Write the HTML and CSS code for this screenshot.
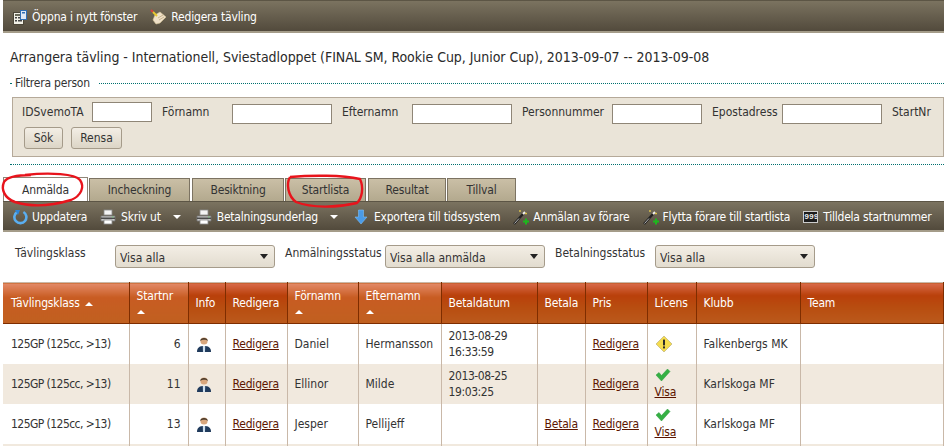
FILE: index.html
```html
<!DOCTYPE html>
<html lang="sv">
<head>
<meta charset="utf-8">
<title>Arrangera tävling</title>
<link rel="stylesheet" href="styles.css">
</head>
<body>
<svg class="defs" width="0" height="0" aria-hidden="true">
  <symbol id="i-window" viewBox="0 0 16 16">
    <rect x="1.5" y="3.5" width="10" height="12" fill="#f2f0e6" stroke="#4c4638"/>
    <rect x="3" y="5" width="7" height="2" fill="#6a6a5a"/>
    <rect x="3" y="8" width="2" height="1.5" fill="#444"/><rect x="6" y="8" width="4" height="1.5" fill="#444"/>
    <rect x="3" y="11" width="2" height="1.5" fill="#444"/><rect x="6" y="11" width="4" height="1.5" fill="#444"/>
    <rect x="8.5" y="1.5" width="6" height="9" fill="#dfe9f5" stroke="#2f6fb5"/>
    <rect x="10" y="3" width="3" height="1.5" fill="#2f6fb5"/>
  </symbol>
  <symbol id="i-brush" viewBox="0 0 18 16">
    <path d="M5 6 L10 3 L16 8 L10 14 L6 15 L3 11 Z" fill="#efe0c8" stroke="#d8c89a" stroke-width=".6"/>
    <path d="M8 9 L13 6 M9 11 L14 8" stroke="#c8b48e" stroke-width="1"/>
    <path d="M1 1 L3 3" stroke="#d8403a" stroke-width="2"/>
    <path d="M3 3 L7 7" stroke="#e8c830" stroke-width="2"/>
  </symbol>
  <symbol id="i-refresh" viewBox="0 0 16 16">
    <path d="M5 3.2 A6 6 0 1 0 11.4 3" fill="none" stroke="#5aaef0" stroke-width="2.6"/>
    <path d="M3 1 L8 1 L6 6 Z" fill="#2f86d8"/>
  </symbol>
  <symbol id="i-print" viewBox="0 0 16 16">
    <rect x="4" y="1" width="8" height="5" fill="#f4f4f4" stroke="#8a8a8a" stroke-width=".8"/>
    <path d="M1 7 L15 7 L15 12 L1 12 Z" fill="#c8c8c8" stroke="#777" stroke-width=".8"/>
    <rect x="1" y="8.5" width="14" height="1.5" fill="#4a4a4a"/>
    <rect x="4" y="11" width="8" height="4" fill="#fff" stroke="#8a8a8a" stroke-width=".8"/>
    <rect x="12" y="7.6" width="1.5" height=".8" fill="#6c6"/>
  </symbol>
  <symbol id="i-down" viewBox="0 0 16 16">
    <path d="M5.5 1 H10.5 V8 H14 L8 15 L2 8 H5.5 Z" fill="#4a9be8" stroke="#7cc0f5" stroke-width=".6"/>
  </symbol>
  <symbol id="i-wand" viewBox="0 0 18 16">
    <path d="M1 15 L10 5" stroke="#222" stroke-width="2.4"/>
    <path d="M1.5 14.5 L6 9.5" stroke="#ddd" stroke-width=".8"/>
    <path d="M10 5 L12 3" stroke="#eee" stroke-width="2"/>
    <path d="M7 1 V3 M6 2 H8 M13 3.5 V5.5 M12 4.5 H14" stroke="#ecd24a" stroke-width=".8"/>
    <path d="M13 9.5 V15.5 M10 12.5 H16" stroke="#1db81d" stroke-width="2"/>
  </symbol>
  <symbol id="i-person" viewBox="0 0 16 16">
    <path d="M1 16 C1 11 4 10 8 10 C12 10 15 11 15 16 Z" fill="#1f3a5c"/>
    <path d="M6.8 10 H9.2 L9 16 H7 Z" fill="#cfe0ee"/>
    <circle cx="8" cy="5" r="3.6" fill="#d9a77d"/>
    <path d="M4.2 5 C4 1 12 1 11.8 5 C10.5 3.4 6 3.4 4.2 5 Z" fill="#4a3a2a"/>
  </symbol>
  <symbol id="i-warn" viewBox="0 0 18 18">
    <path d="M9 1 L17 9 L9 17 L1 9 Z" fill="#f5dc4e" stroke="#cfc48a" stroke-linejoin="round"/>
    <rect x="8" y="4.6" width="2" height="5.8" fill="#2b2b2b"/>
    <rect x="8" y="11.4" width="2" height="2" fill="#2b2b2b"/>
  </symbol>
  <symbol id="i-check" viewBox="0 0 16 14">
    <path d="M1 7 L4 4.5 L6.5 7.5 L12.5 1 L15 3.5 L6.5 13 Z" fill="#35b044" stroke="#2a9a3a" stroke-width=".5"/>
  </symbol>
</svg>

<div class="page">
  <nav class="toolbar toolbar-top">
    <a class="tool"><svg class="ico"><use href="#i-window"/></svg>Öppna i nytt fönster</a>
    <a class="tool"><svg class="ico ico-wide"><use href="#i-brush"/></svg>Redigera tävling</a>
  </nav>

  <h1 class="title">Arrangera tävling - Internationell, Sviestadloppet (FINAL SM, Rookie Cup, Junior Cup), 2013-09-07 -- 2013-09-08</h1>

  <fieldset class="filter">
    <legend class="filter-legend">Filtrera person</legend>
    <div class="filter-panel">
      <div class="filter-row">
        <label class="f-label">IDSvemoTA</label><input class="f-input f-input-id" type="text">
        <label class="f-label">Förnamn</label><input class="f-input" type="text">
        <label class="f-label">Efternamn</label><input class="f-input" type="text">
        <label class="f-label f-label-wide">Personnummer</label><input class="f-input f-input-pn" type="text">
        <label class="f-label">Epostadress</label><input class="f-input" type="text">
        <label class="f-label">StartNr</label>
      </div>
      <div class="filter-buttons">
        <button class="btn btn-sok" type="button">Sök</button>
        <button class="btn btn-rensa" type="button">Rensa</button>
      </div>
    </div>
  </fieldset>

  <div class="tabs">
    <a class="tab tab-active">Anmälda</a>
    <a class="tab tab-1">Incheckning</a>
    <a class="tab tab-2">Besiktning</a>
    <a class="tab tab-3">Startlista</a>
    <a class="tab tab-4">Resultat</a>
    <a class="tab tab-5">Tillval</a>
    <svg class="scribble scribble-a" viewBox="0 0 84 36"><path d="M24 3 C50 0 74 2 79 8 C84 15 80 24 70 28 C50 34 30 35 14 30 C3 26 0 17 3 10 C6 5 16 3 30 3" fill="none" stroke="#e8141c" stroke-width="2.4"/></svg>
    <svg class="scribble scribble-b" viewBox="0 0 82 36"><path d="M6 3 C28 1 58 1 76 5 C80 14 78 24 73 29 C52 34 28 34 12 28 C4 22 2 10 6 3" fill="none" stroke="#e8141c" stroke-width="2.4"/></svg>
  </div>

  <nav class="toolbar toolbar-sub">
    <a class="tool"><svg class="ico"><use href="#i-refresh"/></svg>Uppdatera</a>
    <a class="tool"><svg class="ico ico-print"><use href="#i-print"/></svg>Skriv ut<span class="caret"></span></a>
    <a class="tool"><svg class="ico ico-print"><use href="#i-print"/></svg>Betalningsunderlag<span class="caret"></span></a>
    <a class="tool"><svg class="ico ico-print"><use href="#i-down"/></svg>Exportera till tidssystem</a>
    <a class="tool"><svg class="ico ico-wand"><use href="#i-wand"/></svg>Anmälan av förare</a>
    <a class="tool"><svg class="ico ico-wand"><use href="#i-wand"/></svg>Flytta förare till startlista</a>
    <a class="tool"><span class="num-ico">999</span>Tilldela startnummer</a>
  </nav>

  <div class="selects">
    <label class="s-label">Tävlingsklass</label><span class="select">Visa alla</span>
    <label class="s-label">Anmälningsstatus</label><span class="select">Visa alla anmälda</span>
    <label class="s-label">Betalningsstatus</label><span class="select">Visa alla</span>
  </div>

  <table class="grid">
    <colgroup>
      <col class="c1"><col class="c2"><col class="c3"><col class="c4"><col class="c5"><col class="c6">
      <col class="c7"><col class="c8"><col class="c9"><col class="c10"><col class="c11"><col>
    </colgroup>
    <thead>
      <tr>
        <th>Tävlingsklass <span class="sort sort-inline"></span></th>
        <th>Startnr<br><span class="sort"></span></th>
        <th>Info</th>
        <th>Redigera</th>
        <th>Förnamn<br><span class="sort"></span></th>
        <th>Efternamn<br><span class="sort"></span></th>
        <th>Betaldatum</th>
        <th>Betala</th>
        <th>Pris</th>
        <th>Licens</th>
        <th>Klubb</th>
        <th>Team</th>
      </tr>
    </thead>
    <tbody>
      <tr>
        <td class="sorted klass">125GP (125cc, &gt;13)</td><td class="num sorted">6</td>
        <td><svg class="p-ico"><use href="#i-person"/></svg></td><td><a class="lnk">Redigera</a></td>
        <td>Daniel</td><td>Hermansson</td><td class="date">2013-08-29<br>16:33:59</td><td></td>
        <td><a class="lnk">Redigera</a></td><td><svg class="w-ico"><use href="#i-warn"/></svg></td>
        <td>Falkenbergs MK</td><td></td>
      </tr>
      <tr>
        <td class="sorted klass">125GP (125cc, &gt;13)</td><td class="num sorted">11</td>
        <td><svg class="p-ico"><use href="#i-person"/></svg></td><td><a class="lnk">Redigera</a></td>
        <td>Ellinor</td><td>Milde</td><td class="date">2013-08-25<br>19:03:25</td><td></td>
        <td><a class="lnk">Redigera</a></td><td class="lic"><svg class="c-ico"><use href="#i-check"/></svg><a class="lnk">Visa</a></td>
        <td>Karlskoga MF</td><td></td>
      </tr>
      <tr>
        <td class="sorted klass">125GP (125cc, &gt;13)</td><td class="num sorted">13</td>
        <td><svg class="p-ico"><use href="#i-person"/></svg></td><td><a class="lnk">Redigera</a></td>
        <td>Jesper</td><td>Pellijeff</td><td class="date"></td><td><a class="lnk">Betala</a></td>
        <td><a class="lnk">Redigera</a></td><td class="lic"><svg class="c-ico"><use href="#i-check"/></svg><a class="lnk">Visa</a></td>
        <td>Karlskoga MF</td><td></td>
      </tr>
      <tr class="tail"><td class="sorted"></td><td class="sorted"></td><td></td><td></td><td></td><td></td><td></td><td></td><td></td><td></td><td></td><td></td></tr>
    </tbody>
  </table>
</div>
</body>
</html>
```
FILE: styles.css
```css
* { box-sizing: border-box; }
html, body { margin: 0; padding: 0; background: #fff; }
body { font-family: "DejaVu Sans Condensed", "DejaVu Sans", sans-serif; font-stretch: condensed; font-size: 12px; color: #333; height: 446px; overflow: hidden; }
.defs { position: absolute; }
.page { padding-left: 3px; }

.toolbar { display: flex; align-items: center; background: linear-gradient(#7b7360, #524a3c); color: #fff; border-top: 1px solid #5c5545; border-bottom: 2px solid #a49c89; padding-top: 1px; }
.toolbar-top { height: 33px; padding-left: 9px; gap: 13px; letter-spacing: -.18px; }
.toolbar-sub { height: 31px; padding-left: 9px; letter-spacing: -.22px; }
.tool { display: flex; align-items: center; white-space: nowrap; font-size: 12px; }
.ico { width: 16px; height: 16px; margin-right: 4px; flex: none; }
.ico-wide { width: 18px; margin-right: 3px; }
.ico-print { margin-right: 5px; }
.ico-wand { width: 18px; margin-right: 2px; }
.toolbar-sub .tool { margin-right: 13px; }
.caret { width: 0; height: 0; border: 4px solid transparent; border-top-color: #fff; border-bottom-width: 0; margin-left: 12px; margin-right: 2px; }
.num-ico { width: 15px; height: 12px; flex: none; text-align: center; font: bold 8px/10px "Liberation Mono", monospace; letter-spacing: 0; background: #1c1c1c; color: #eee; border: 1px solid #ccc; margin-right: 5px; overflow: hidden; }

.title { margin: 0 0 0 7px; padding-top: 15px; font-weight: 400; font-size: 14px; line-height: 18px; letter-spacing: -.045px; color: #2a2a2a; white-space: nowrap; height: 42px; }

.filter { margin: 0 0 0 7px; padding: 6px 0 7px 2px; min-width: 0; border: 0; border-top: 1px dotted #00706f; border-bottom: 1px dotted #00706f; height: 90px; }
.filter-legend { margin-left: 1px; padding: 0 8px 0 2px; font-size: 12px; line-height: 16px; letter-spacing: -.2px; color: #333; }
.filter-panel { height: 60px; border: 1px solid #b5a999; background: #eae4d8; padding: 4px 0 0 9px; }
.filter-row { display: flex; align-items: flex-start; height: 25px; }
.f-label { width: 70px; flex: none; line-height: 16px; padding-top: 2px; }
.f-label-wide { width: 90px; }
.f-input { width: 100px; height: 20px; margin: 2px 10px 0 0; flex: none; border: 1px solid #8f8677; background: #fff; padding: 0; }
.f-input-id { width: 60px; margin-top: 0; }
.f-input-pn { width: 90px; }
.filter-buttons { display: flex; gap: 8px; padding-left: 2px; }
.btn { height: 22px; padding: 0; font: inherit; color: #333; background: linear-gradient(#f3eee5, #dcd5c6); border: 1px solid #a59b8a; border-radius: 3px; }
.btn-sok { width: 39px; }
.btn-rensa { width: 51px; }

.tabs { position: relative; display: flex; margin-top: 12px; height: 24px; align-items: flex-end; letter-spacing: -.15px; }
.tab { display: flex; align-items: center; justify-content: center; height: 23px; background: linear-gradient(#cabfa6, #b3a98e); border: 1px solid #7c7362; border-bottom: 0; color: #333; margin-right: 1px; }
.tab-active { width: 85px; height: 24px; background: #fff; border-color: #8f8677; }
.tab-1 { width: 101px; margin-right: 2px; }
.tab-2 { width: 92px; }
.tab-3 { width: 81px; margin-right: 2px; }
.tab-4 { width: 78px; }
.tab-5 { width: 69px; }
.scribble { position: absolute; overflow: visible; pointer-events: none; }
.scribble-a { left: -2px; top: -5px; width: 84px; height: 36px; }
.scribble-b { left: 281px; top: -3px; width: 82px; height: 36px; }

.selects { display: flex; align-items: flex-start; padding: 13px 0 0 12px; height: 50px; }
.s-label { width: 100px; flex: none; line-height: 16px; }
.select { position: relative; width: 160px; height: 23px; margin-right: 10px; flex: none; padding: 4px 0 0 4px; line-height: 16px; background: linear-gradient(#f3eee5, #e2dccf); border: 1px solid #a59b8a; border-radius: 3px; }
.select::after { content: ""; position: absolute; right: 6px; top: 8px; border: 4px solid transparent; border-top: 5px solid #222; border-bottom: 0; }

.grid { width: 941px; table-layout: fixed; border-collapse: collapse; }
.c1 { width: 126px; } .c2 { width: 59px; } .c3 { width: 37px; } .c4 { width: 62px; } .c5 { width: 71px; } .c6 { width: 83px; }
.c7 { width: 96px; } .c8 { width: 48px; } .c9 { width: 62px; } .c10 { width: 49px; } .c11 { width: 104px; }
.grid th { height: 41px; padding: 0 7px; text-align: left; font-weight: 400; letter-spacing: -.15px; color: #fff; line-height: 14px; background: linear-gradient(#d96a4a 0, #b9400a 30%, #b84d10 60%, #bb5a1c 100%); border-right: 1px solid #7e2d00; border-bottom: 1px solid #7e2d00; border-top: 1px solid #c9b8a8; vertical-align: middle; }
.grid th:first-child { padding-left: 8px; background: linear-gradient(#e38a68 0, #c85c22 35%, #c06020 100%); }
.grid th:nth-child(2), .grid th:nth-child(5), .grid th:nth-child(6) { background: linear-gradient(#e38a68 0, #c85c22 35%, #c06020 100%); }
.grid td { height: 40px; padding: 0 7px; border-right: 1px solid #c9b8a8; line-height: 16px; vertical-align: middle; }
.grid tbody tr:nth-child(even) td { background: #f1e9de; }
.grid tbody tr:nth-child(odd) td { background: #fff; }
.grid tbody td.sorted { background: #f4efe8; }
.grid tbody tr:nth-child(even) td.sorted { background: #f1e9de; }
.grid td:first-child { padding-left: 8px; }
.klass { letter-spacing: -.55px; white-space: nowrap; }
.num { text-align: right; }
.sort { display: inline-block; width: 0; height: 0; border: 4px solid transparent; border-bottom: 4px solid #fff; border-top: 0; }
.sort-inline { vertical-align: 1px; margin-left: 2px; }
.lnk { color: #5c1500; text-decoration: underline; letter-spacing: -.2px; }
.date { white-space: nowrap; letter-spacing: -.4px; }
.p-ico { display: block; width: 16px; height: 16px; }
.w-ico { display: block; width: 18px; height: 18px; }
.lic { line-height: 14px; }
.c-ico { display: block; width: 16px; height: 14px; margin-bottom: 2px; }
.tail td { height: 2px; }
```
